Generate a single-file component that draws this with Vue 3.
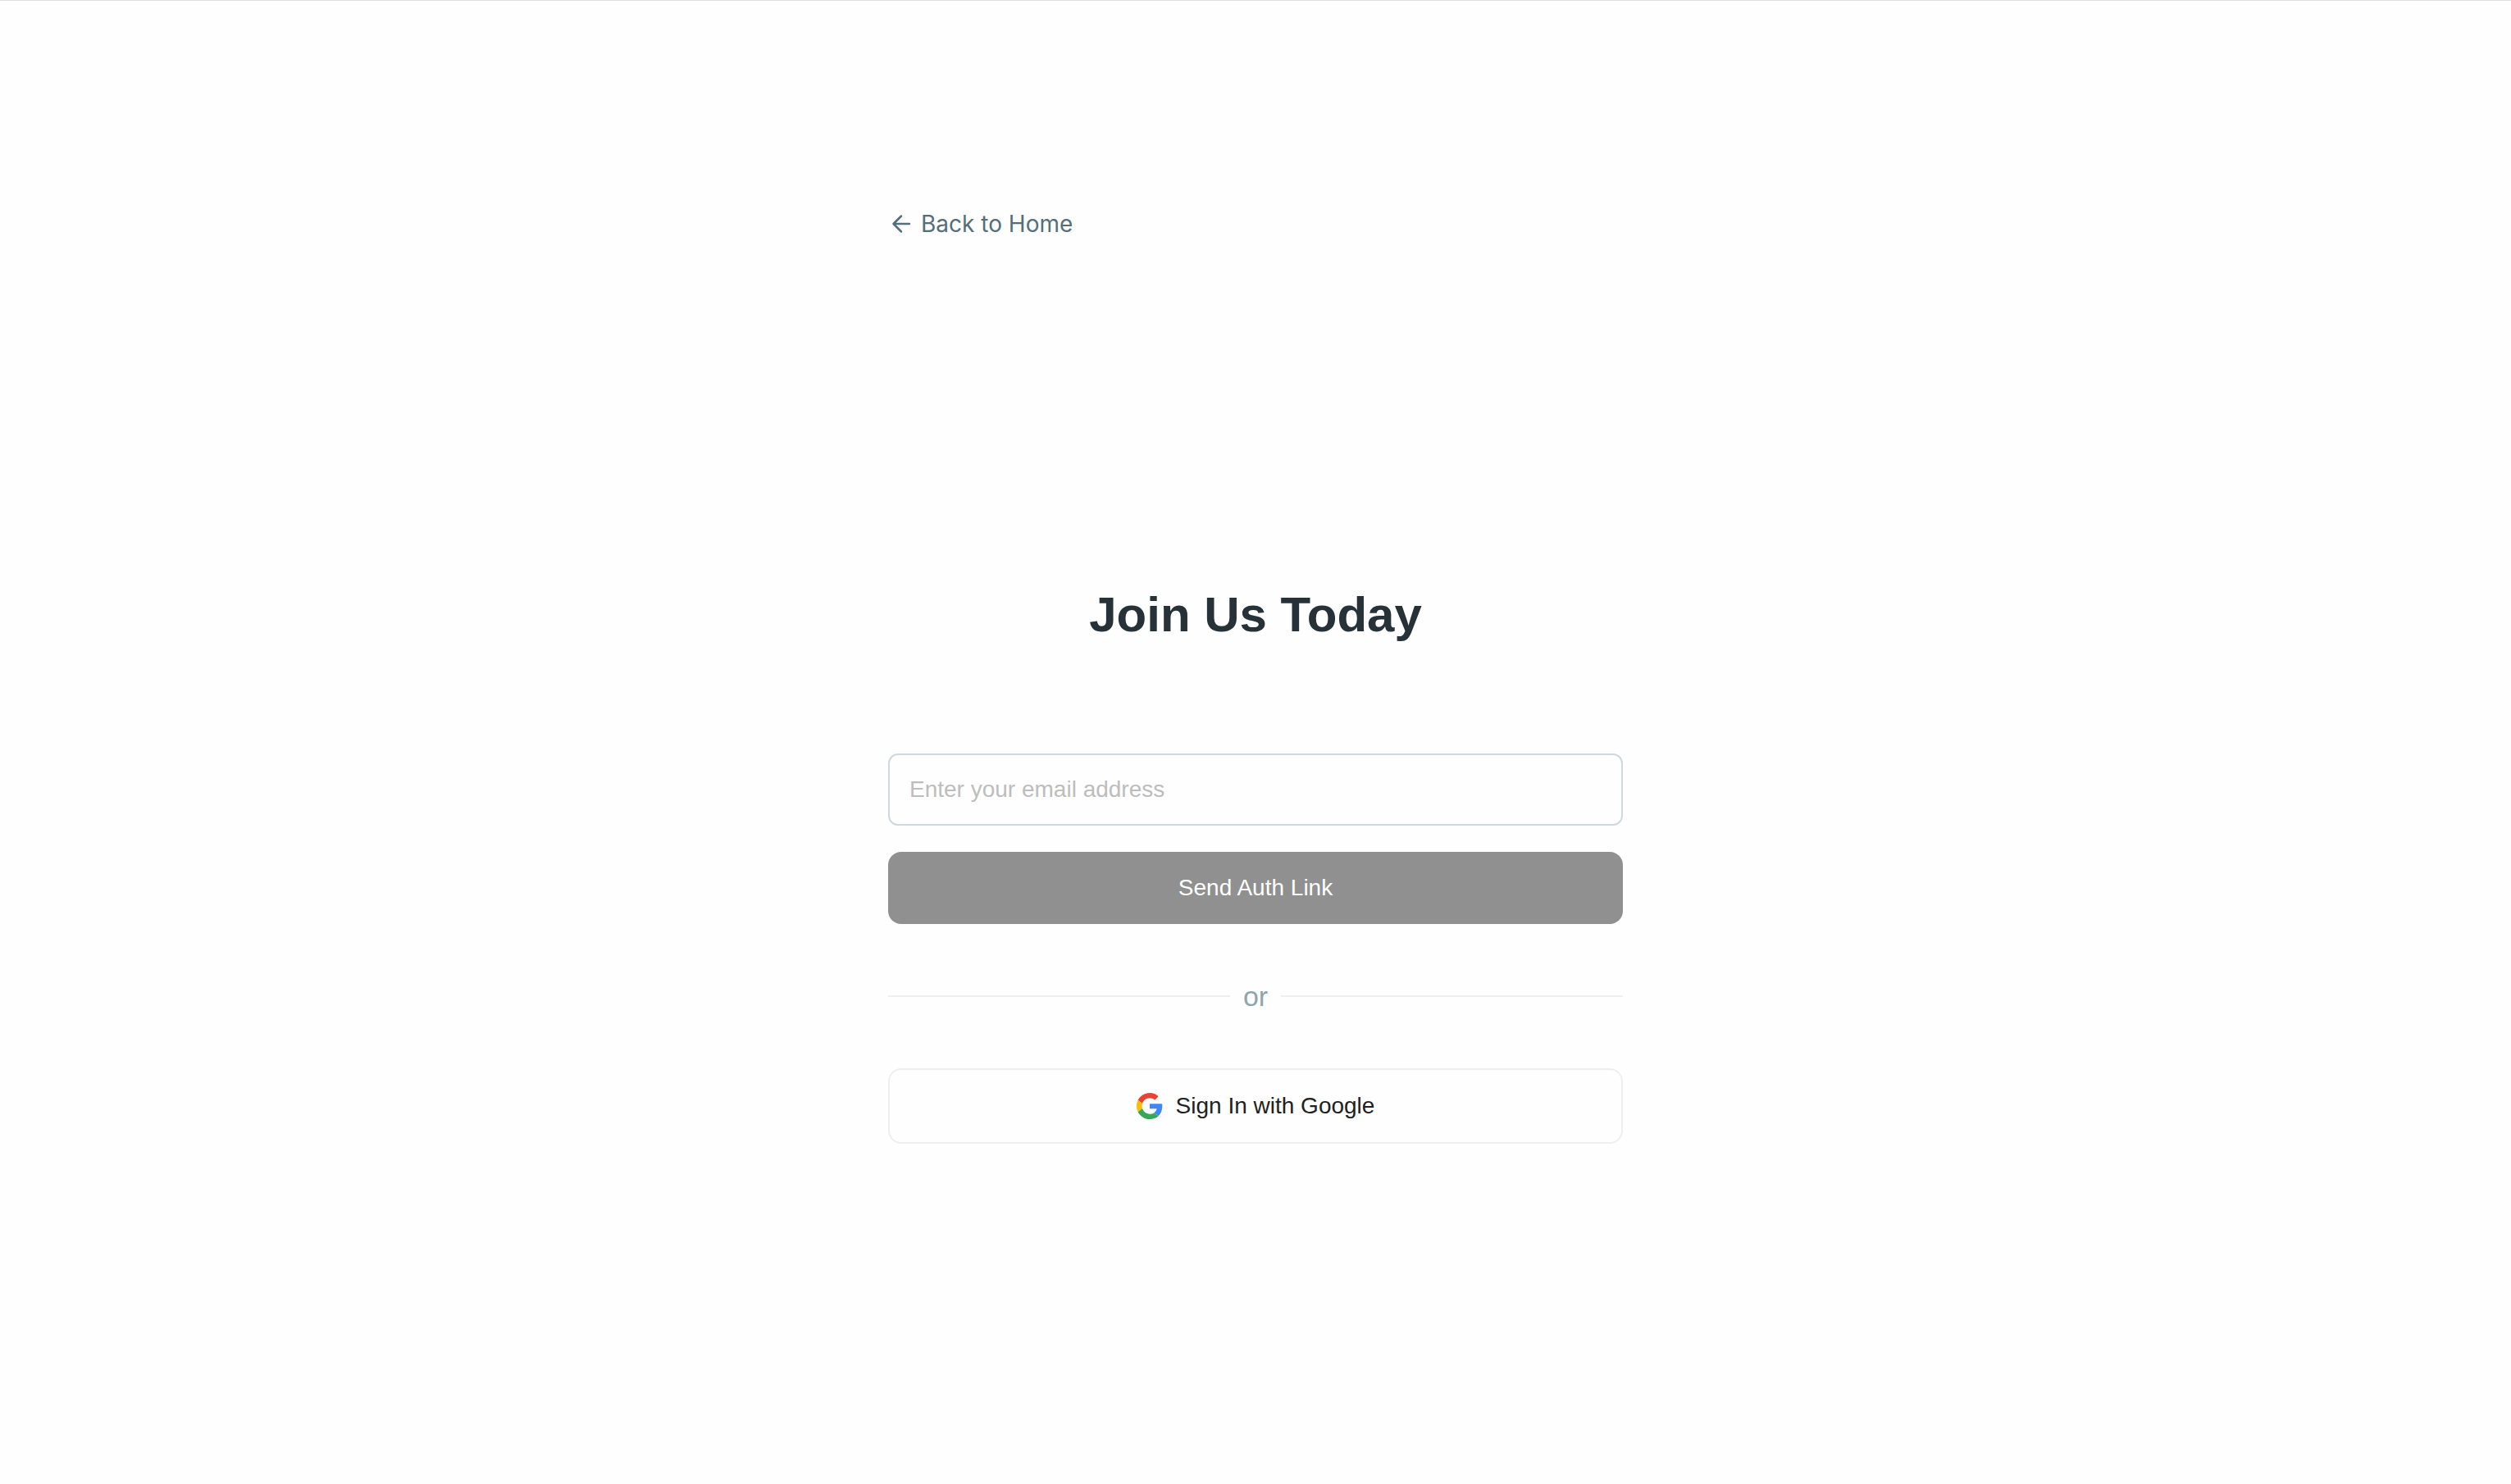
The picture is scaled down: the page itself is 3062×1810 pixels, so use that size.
<script setup>
import { ref } from 'vue'

const email = ref('')
</script>

<template>
  <main class="page">
    <div class="column">
      <nav class="nav">
        <a class="back" href="#">
          <svg class="back-icon" viewBox="0 0 32 32" aria-hidden="true">
            <path d="M26 16H6.5M16 6.5L6.5 16l9.500 9.500" />
          </svg>
          <span>Back to Home</span>
        </a>
      </nav>

      <h1 class="title">Join Us Today</h1>

      <form class="form" @submit.prevent>
        <input
          v-model="email"
          class="field"
          type="email"
          placeholder="Enter your email address"
          aria-label="Email address"
        />
        <button class="submit" type="submit" disabled>Send Auth Link</button>
      </form>

      <div class="divider">or</div>

      <button class="google" type="button">
        <svg class="google-icon" viewBox="0 0 48 48" aria-hidden="true">
          <path fill="#EA4335" d="M24 9.5c3.54 0 6.71 1.22 9.21 3.6l6.85-6.85C35.9 2.38 30.47 0 24 0 14.62 0 6.51 5.38 2.56 13.22l7.98 6.19C12.43 13.72 17.74 9.5 24 9.5z" />
          <path fill="#4285F4" d="M46.98 24.55c0-1.57-.15-3.09-.38-4.55H24v9.02h12.94c-.58 2.96-2.26 5.48-4.78 7.18l7.73 6c4.51-4.18 7.09-10.36 7.09-17.65z" />
          <path fill="#FBBC05" d="M10.53 28.59c-.48-1.45-.76-2.99-.76-4.59s.27-3.14.76-4.59l-7.98-6.19C.92 16.46 0 20.12 0 24c0 3.88.92 7.54 2.56 10.78l7.97-6.19z" />
          <path fill="#34A853" d="M24 48c6.48 0 11.93-2.13 15.89-5.81l-7.73-6c-2.15 1.45-4.92 2.3-8.16 2.3-6.26 0-11.57-4.22-13.47-9.91l-7.98 6.19C6.51 42.62 14.62 48 24 48z" />
        </svg>
        <span>Sign In with Google</span>
      </button>
    </div>
  </main>
</template>

<style>
body {
  background: #fefefe;
}
</style>

<style scoped>
.page {
  display: flex;
  justify-content: center;
  box-sizing: border-box;
  min-height: 100vh;
  padding: 240px 32px 96px;
  border-top: 1px solid #dedede;
  font-family: "Liberation Sans", Arial, sans-serif;
}

.column {
  display: flex;
  flex-direction: column;
  width: 100%;
  max-width: 896px;
}

.nav {
  display: flex;
}

.back {
  display: flex;
  align-items: center;
  gap: 8px;
  height: 64px;
  color: #546e7a;
  font: 400 28px/40px Inter, sans-serif;
  text-decoration: none;
}

.back-icon {
  width: 32px;
  height: 32px;
  fill: none;
  stroke: currentColor;
  stroke-width: 2.5;
  stroke-linecap: round;
  stroke-linejoin: round;
}

.title {
  margin: 408px 0 132px;
  color: #263238;
  font-size: 60px;
  font-weight: 700;
  line-height: 74px;
  text-align: center;
}

.form {
  display: flex;
  flex-direction: column;
  gap: 32px;
}

.field,
.submit,
.google {
  box-sizing: border-box;
  width: 100%;
  margin: 0;
  font-family: inherit;
  font-size: 28px;
}

.field {
  height: 88px;
  padding: 0 24px;
  border: 2px solid #cfd8dc;
  border-radius: 12px;
  outline: none;
  background: #fefefe;
  color: #263238;
}

.field::placeholder {
  color: #bdbdbd;
  opacity: 1;
}

.submit {
  height: 88px;
  border: 0;
  border-radius: 16px;
  background: #909090;
  color: #fff;
}

.divider {
  display: flex;
  align-items: center;
  gap: 16px;
  margin: 64px 0;
  color: #90a4ae;
  font-size: 34px;
  line-height: 48px;
}

.divider::before,
.divider::after {
  content: "";
  flex: 1;
  height: 2px;
  background: #eee;
}

.google {
  display: flex;
  align-items: center;
  justify-content: center;
  gap: 16px;
  height: 92px;
  border: 2px solid #eee;
  border-radius: 16px;
  background: #fefefe;
  color: #212121;
}

.google-icon {
  width: 32px;
  height: 32px;
}
</style>
